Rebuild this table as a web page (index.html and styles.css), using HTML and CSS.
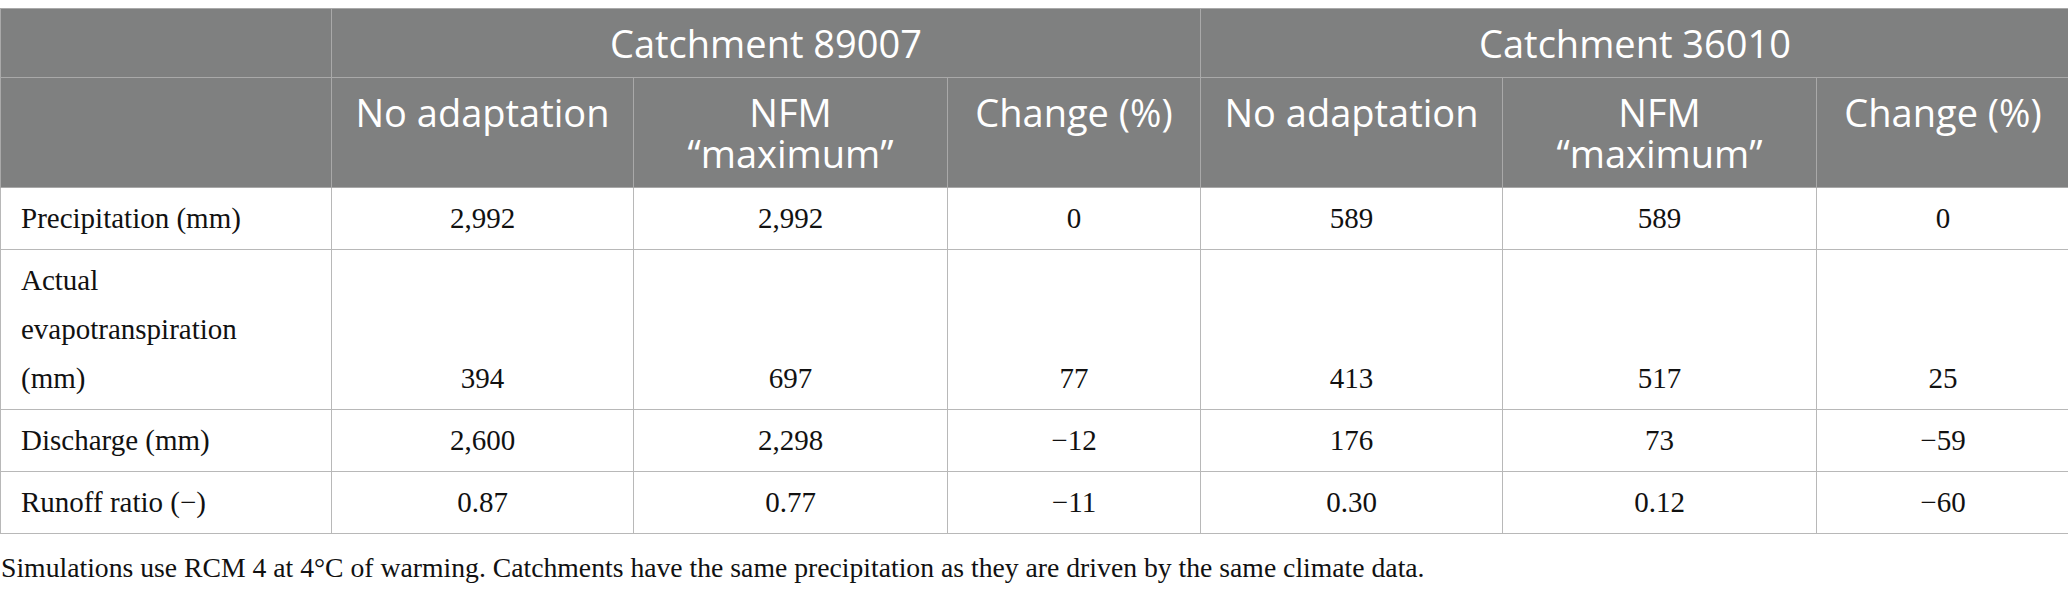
FILE: index.html
```html
<!DOCTYPE html>
<html lang="en">
<head>
    <meta charset="UTF-8">
    <meta name="viewport" content="width=device-width, initial-scale=1.0">
    <title>Water balance under NFM</title>
    <link rel="stylesheet" href="styles.css">
</head>
<body>
    <table class="data-table">
        <colgroup>
            <col class="col-label">
            <col class="col-base">
            <col class="col-nfm">
            <col class="col-change">
            <col class="col-base">
            <col class="col-nfm">
            <col class="col-change">
        </colgroup>
        <thead>
            <tr>
                <th></th>
                <th colspan="3">Catchment 89007</th>
                <th colspan="3">Catchment 36010</th>
            </tr>
            <tr class="sub-head">
                <th></th>
                <th>No adaptation</th>
                <th>NFM<br>“maximum”</th>
                <th>Change (%)</th>
                <th>No adaptation</th>
                <th>NFM<br>“maximum”</th>
                <th>Change (%)</th>
            </tr>
        </thead>
        <tbody>
            <tr>
                <td>Precipitation (mm)</td>
                <td>2,992</td>
                <td>2,992</td>
                <td>0</td>
                <td>589</td>
                <td>589</td>
                <td>0</td>
            </tr>
            <tr>
                <td>Actual evapotranspiration (mm)</td>
                <td>394</td>
                <td>697</td>
                <td>77</td>
                <td>413</td>
                <td>517</td>
                <td>25</td>
            </tr>
            <tr>
                <td>Discharge (mm)</td>
                <td>2,600</td>
                <td>2,298</td>
                <td>−12</td>
                <td>176</td>
                <td>73</td>
                <td>−59</td>
            </tr>
            <tr>
                <td>Runoff ratio (−)</td>
                <td>0.87</td>
                <td>0.77</td>
                <td>−11</td>
                <td>0.30</td>
                <td>0.12</td>
                <td>−60</td>
            </tr>
        </tbody>
    </table>

    <p class="table-note">Simulations use RCM 4 at 4°C of warming. Catchments have the same precipitation as they are driven by the same climate data.</p>
</body>
</html>
```

FILE: styles.css
```css
body {
    margin: 8px 0 0;
    background: #fff;
    color: #111;
    font-family: "Liberation Serif", "Times New Roman", serif;
}

.data-table {
    width: 2067px;
    border-collapse: collapse;
    table-layout: fixed;
}

.col-label {
    width: 331px;
}

.col-base {
    width: 302px;
}

.col-nfm {
    width: 314px;
}

.col-change {
    width: 253px;
}

.data-table th {
    background-color: #7f8080;
    color: #fff;
    font-family: "Open Sans", "Noto Sans", sans-serif;
    font-weight: 400;
    font-size: 38px;
    line-height: 41px;
    padding: 14px 8px 13px;
    text-align: center;
    vertical-align: top;
    border: 1px solid #a9a9a9;
}

.data-table td {
    font-size: 29px;
    line-height: 49px;
    padding: 6px 8px;
    text-align: center;
    vertical-align: bottom;
    border: 1px solid #b8b8b8;
}

.data-table td:first-child {
    text-align: left;
    padding-left: 20px;
    padding-right: 40px;
}

.table-note {
    margin: 14px 0 0 1px;
    font-size: 27.7px;
    line-height: 40px;
}
```
